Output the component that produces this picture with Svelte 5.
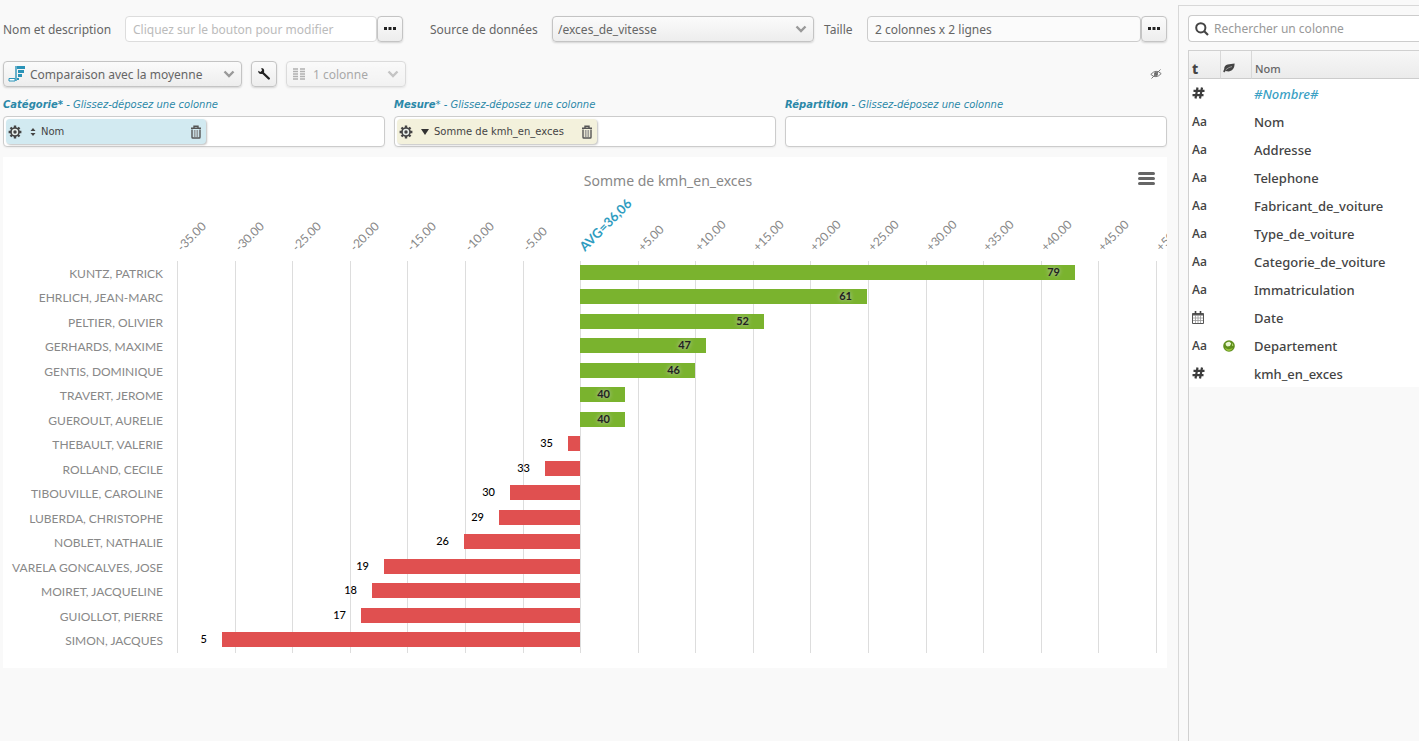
<script lang="ts">
	type Row = { name: string; value: number };

	const avg = 36.06;
	const rows: Row[] = [
		{ name: 'KUNTZ, PATRICK', value: 79 },
		{ name: 'EHRLICH, JEAN-MARC', value: 61 },
		{ name: 'PELTIER, OLIVIER', value: 52 },
		{ name: 'GERHARDS, MAXIME', value: 47 },
		{ name: 'GENTIS, DOMINIQUE', value: 46 },
		{ name: 'TRAVERT, JEROME', value: 40 },
		{ name: 'GUEROULT, AURELIE', value: 40 },
		{ name: 'THEBAULT, VALERIE', value: 35 },
		{ name: 'ROLLAND, CECILE', value: 33 },
		{ name: 'TIBOUVILLE, CAROLINE', value: 30 },
		{ name: 'LUBERDA, CHRISTOPHE', value: 29 },
		{ name: 'NOBLET, NATHALIE', value: 26 },
		{ name: 'VARELA GONCALVES, JOSE', value: 19 },
		{ name: 'MOIRET, JACQUELINE', value: 18 },
		{ name: 'GUIOLLOT, PIERRE', value: 17 },
		{ name: 'SIMON, JACQUES', value: 5 }
	];
	const ticks = Array.from({ length: 18 }, (_, i) => i * 5 - 35);

	const columns = [
		{ type: 'number', name: '#Nombre#', computed: true },
		{ type: 'text', name: 'Nom' },
		{ type: 'text', name: 'Addresse' },
		{ type: 'text', name: 'Telephone' },
		{ type: 'text', name: 'Fabricant_de_voiture' },
		{ type: 'text', name: 'Type_de_voiture' },
		{ type: 'text', name: 'Categorie_de_voiture' },
		{ type: 'text', name: 'Immatriculation' },
		{ type: 'date', name: 'Date' },
		{ type: 'text', name: 'Departement', geo: true },
		{ type: 'number', name: 'kmh_en_exces' }
	];

	// chart geometry
	const left = 174;
	const right = 11;
	const top = 104;
	const plotHeight = 392;
	const step = plotHeight / rows.length;
	const barHeight = 15;

	let width = $state(1164);
	let unit = $derived((width - left - right) / 85);

	const x = (v: number) => Math.round(left + (v + 35) * unit);
	const y = (i: number) => Math.floor(top + (i + 0.5) * step);

	function tickLabel(t: number) {
		if (t === 0) return 'AVG=36,06';
		return (t > 0 ? '+' : '') + t.toFixed(2);
	}
</script>

{#snippet chevron()}
	<svg class="chevron" viewBox="0 0 12 8" width="12" height="8" aria-hidden="true">
		<path d="M1.5 1.5 6 6l4.5-4.5" fill="none" stroke="currentColor" stroke-width="2.4" />
	</svg>
{/snippet}

{#snippet gear()}
	<svg viewBox="0 0 14 14" width="14" height="14" aria-hidden="true">
		<path
			d="M7 .6v12.8M.6 7h12.800M2.500 2.500l9 9M11.500 2.500l-9 9"
			stroke="#444"
			stroke-width="2.4"
		/>
		<circle cx="7" cy="7" r="4" fill="#e8eeea" stroke="#444" stroke-width="1.6" />
		<circle cx="7" cy="7" r="1.7" fill="#444" />
	</svg>
{/snippet}

{#snippet trash()}
	<svg viewBox="0 0 12 14" width="12" height="14" aria-hidden="true">
		<path d="M4 2.500V1.200h4v1.300M1 3.200h10" fill="none" stroke="#555" stroke-width="1.400" />
		<path d="M2 4.500v7.700q0 .8.8.8h6.400q.8 0 .8-.8V4.500" fill="none" stroke="#555" stroke-width="1.400" />
		<path d="M4.400 5v7M6 5v7M7.600 5v7" stroke="#888" stroke-width=".9" />
	</svg>
{/snippet}

{#snippet dots()}
	<svg viewBox="0 0 12 3" width="12" height="3" aria-hidden="true">
		<path d="M0 0h3v3H0zM4.500 0h3v3h-3zM9 0h3v3H9z" fill="#222" />
	</svg>
{/snippet}

<div class="page">
	<main>
		<div class="settings">
			<label for="name">Nom et description</label>
			<div class="field">
				<input id="name" class="faded" type="text" placeholder="Cliquez sur le bouton pour modifier" />
				<button class="btn more" aria-label="Modifier">{@render dots()}</button>
			</div>
			<label class="source-label" for="source">Source de données</label>
			<div class="select">
				<select id="source" class="source"><option>/exces_de_vitesse</option></select>
				{@render chevron()}
			</div>
			<label class="size-label" for="size">Taille</label>
			<div class="field">
				<input id="size" type="text" value="2 colonnes x 2 lignes" />
				<button class="btn more" aria-label="Modifier">{@render dots()}</button>
			</div>
		</div>

		<div class="tools">
			<div class="select type">
				<svg class="lead" viewBox="0 0 18 18" width="18" height="18" aria-hidden="true">
					<path d="M8 1v15" stroke="#2a93b8" stroke-width="1.400" />
					<path d="M9 1h8v3H9zM10 5h6v3h-6zM10 9h4v3h-4zM9 13h2v2H9z" fill="#2a93b8" />
					<path d="M1 13.500h6v2.500H1z" fill="#fff" stroke="#2a93b8" />
				</svg>
				<select aria-label="Type de graphique"><option>Comparaison avec la moyenne</option></select>
				{@render chevron()}
			</div>
			<button class="btn" aria-label="Options">
				<svg viewBox="0 0 14 14" width="14" height="14" aria-hidden="true">
					<path d="M5.500 5.500l6.300 6" stroke="#222" stroke-width="2.400" stroke-linecap="round" />
					<path d="M4.200 1A3 3 0 1 1 1.200 3.800L3.400 5 5 3.500z" fill="#222" />
				</svg>
			</button>
			<div class="select count">
				<svg class="lead" viewBox="0 0 13 12" width="13" height="12" aria-hidden="true">
					<path
						d="M0 1h5M0 3.500h5M0 6h5M0 8.500h5M0 11h5M7 1h5M7 3.500h5M7 6h5M7 8.500h5M7 11h5"
						stroke="#777"
						stroke-width="1.400"
					/>
				</svg>
				<select aria-label="Nombre de colonnes" disabled><option>1 colonne</option></select>
				{@render chevron()}
			</div>
			<button class="eye" aria-label="Masquer">
				<svg viewBox="0 0 12 10" width="12" height="10" aria-hidden="true">
					<path d="M.8 5.400Q6-.4 11.200 4.600 6 10.400.8 5.400z" fill="none" stroke="#777" />
					<circle cx="6" cy="5" r="2" fill="#666" />
					<path d="M1.500 9.500l9-9" stroke="#777" />
				</svg>
			</button>
		</div>

		<div class="zones">
			<section>
				<h2><b>Catégorie*</b> - Glissez-déposez une colonne</h2>
				<div class="zone">
					<div class="chip category">
						<button aria-label="Réglages">{@render gear()}</button>
						<svg class="sort" viewBox="0 0 6 8" width="6" height="8" aria-hidden="true">
							<path d="M3 0l2.500 3h-5zM3 8l2.500-3h-5z" fill="#444" />
						</svg>
						<span>Nom</span>
						<button aria-label="Supprimer">{@render trash()}</button>
					</div>
				</div>
			</section>
			<section>
				<h2><b>Mesure</b>* - Glissez-déposez une colonne</h2>
				<div class="zone">
					<div class="chip measure">
						<button aria-label="Réglages">{@render gear()}</button>
						<svg class="sort" viewBox="0 0 8 6" width="8" height="6" aria-hidden="true">
							<path d="M0 0h8L4 6z" fill="#333" />
						</svg>
						<span>Somme de kmh_en_exces</span>
						<button aria-label="Supprimer">{@render trash()}</button>
					</div>
				</div>
			</section>
			<section>
				<h2><b>Répartition</b> - Glissez-déposez une colonne</h2>
				<div class="zone"></div>
			</section>
		</div>

		<div class="chart" bind:clientWidth={width}>
			<svg {width} height="511" role="img" aria-label="Somme de kmh_en_exces">
				<text class="title" x={width / 2 + 83} y="29">Somme de kmh_en_exces</text>
				{#each ticks as t}
					<line class="grid" x1={x(t) + 0.5} x2={x(t) + 0.5} y1={top} y2={top + plotHeight} />
					<text class="tick" class:avg={t === 0} transform="translate({x(t) + 5} {top - 9}) rotate(-45)">
						{tickLabel(t)}
					</text>
				{/each}
				{#each rows as row, i}
					{@const end = x(row.value - avg)}
					{@const up = row.value > avg}
					<text class="name" x="160" y={y(i) + 5}>{row.name}</text>
					<rect
						class={up ? 'up' : 'down'}
						x={Math.min(x(0), end)}
						y={y(i) - 8}
						width={Math.abs(end - x(0))}
						height={barHeight}
					/>
					<text class="value" class:inside={up} x={end - 15} y={y(i) + 3}>{row.value}</text>
				{/each}
			</svg>
			<button class="menu" aria-label="Menu du graphique">
				<svg viewBox="0 0 17 13" width="17" height="13" aria-hidden="true">
					<path d="M1.500 1.500h14M1.500 6.500h14M1.500 11.500h14" stroke="#666" stroke-width="3" stroke-linecap="round" />
				</svg>
			</button>
		</div>
	</main>

	<aside>
		<div class="search">
			<svg viewBox="0 0 14 14" width="14" height="14" aria-hidden="true">
				<circle cx="5.800" cy="5.800" r="4.600" fill="none" stroke="#444" stroke-width="2" />
				<path d="M9 9l4 4" stroke="#444" stroke-width="2.200" />
			</svg>
			<input type="search" aria-label="Rechercher un colonne" placeholder="Rechercher un colonne" />
		</div>
		<div class="list">
			<table>
				<thead>
					<tr>
						<th class="t">t</th>
						<th aria-label="Hiérarchie">
							<svg viewBox="0 0 12 10" width="12" height="10" aria-hidden="true">
								<path d="M11.600.6C7 1.400 1.200.6 1.200 6L.2 8.600l1 .8 1.400-1.400c5 1.600 9-1 9-7.400z" fill="#444" />
								<path d="M2.500 7.200C4.500 5 6.500 4.200 9 3.600" fill="none" stroke="#bbb" stroke-width=".7" />
							</svg>
						</th>
						<th>Nom</th>
					</tr>
				</thead>
				<tbody>
					{#each columns as col}
						<tr>
							<td class="kind">
								{#if col.type === 'text'}
									Aa
								{:else if col.type === 'number'}
									<svg viewBox="0 0 13 12" width="13" height="12" aria-label="Nombre">
										<path d="M5.500.5l-2 11M10 .5l-2 11M1.500 3.800h11M.5 8.200h11" stroke="#3c3c3c" stroke-width="2.200" />
									</svg>
								{:else}
									<svg viewBox="0 0 12 13" width="12" height="13" aria-label="Date">
										<path d="M.5 2.500h11v10H.5z" fill="#fff" stroke="#555" />
										<path d="M.5 3.500h11" stroke="#555" stroke-width="2" />
										<path d="M3.500 0v3M8.500 0v3" stroke="#444" stroke-width="1.600" />
										<path d="M3.500 4v8M6 4v8M8.500 4v8M1 7h10M1 9.500h10" stroke="#999" stroke-width=".8" />
									</svg>
								{/if}
							</td>
							<td>
								{#if col.geo}
									<svg viewBox="0 0 12 12" width="12" height="12" aria-label="Géographique">
										<circle cx="6" cy="6" r="5.800" fill="#5f8f1c" />
										<path d="M2 7.500Q5 10.500 10 8 8.500 11 6 11 3 11 2 7.500z" fill="#98c43c" />
										<path d="M2.500 3.500Q4 1.500 6.500 1.800L8.200 3.200 7 6 4.500 6.500 3 5.500z" fill="#e9f6d0" />
										<path d="M9 3l1.500 2.500L9 6z" fill="#b9dd74" />
									</svg>
								{/if}
							</td>
							<td class:computed={col.computed}>{col.name}</td>
						</tr>
					{/each}
				</tbody>
			</table>
		</div>
	</aside>
</div>

<style>
	:global(body) {
		background: #f9f9f9;
		font-family: 'Noto Sans', 'Open Sans', sans-serif;
		font-size: 12px;
		color: #666;
	}

	.page {
		display: flex;
		min-height: 100vh;
		overflow: hidden;
	}

	main {
		flex: 1;
		min-width: 0;
		padding: 16px 11px 0 3px;
	}

	input,
	select,
	button {
		box-sizing: border-box;
		margin: 0;
		font: inherit;
		color: inherit;
	}

	input,
	select,
	.btn {
		height: 26px;
		border: 1px solid #ccc;
		border-radius: 4px;
	}

	input {
		flex: 1;
		min-width: 0;
		padding: 0 7px;
		background: #fbfbfb;
	}

	input::placeholder {
		color: #999;
		opacity: 1;
	}

	.faded {
		background: #fff;
		border-color: #ddd;
	}

	.faded::placeholder {
		color: #bbb;
	}

	.btn {
		display: flex;
		align-items: center;
		justify-content: center;
		width: 26px;
		padding: 0;
	}

	.more {
		padding-bottom: 2px;
	}

	select,
	.btn {
		background: linear-gradient(#fbfbfb, #ededed);
		border-color: #c4c4c4;
		box-shadow: 0 1px 2px rgba(0, 0, 0, 0.15);
	}

	.settings {
		display: grid;
		grid-template-columns: 122px 278fr 149px 262fr 53px 300fr;
		align-items: center;
	}

	.source-label {
		padding-left: 27px;
	}

	.size-label {
		padding-left: 10px;
	}

	.field {
		display: flex;
	}

	.select {
		position: relative;
		display: flex;
		align-items: center;
	}

	select {
		width: 100%;
		padding: 0 26px;
		appearance: none;
	}

	select.source {
		padding-left: 5px;
	}

	.chevron {
		position: absolute;
		right: 7px;
		color: #999;
	}

	.lead {
		position: absolute;
		left: 5px;
	}

	.tools {
		display: flex;
		align-items: center;
		gap: 9px;
		margin-top: 19px;
	}

	.type {
		width: 239px;
	}

	.count {
		width: 120px;
		opacity: 0.55;
	}

	.count select {
		opacity: 1;
	}

	.count .lead {
		left: 7px;
	}

	.eye {
		display: flex;
		margin-left: auto;
		padding: 0 5px;
		border: 0;
		background: none;
	}

	.zones {
		display: grid;
		grid-template-columns: repeat(3, 1fr);
		gap: 9px;
		margin-top: 10px;
	}

	h2 {
		margin: 0 0 3px;
		font: italic 10px/16px 'DejaVu Sans', sans-serif;
		color: #2b88a8;
	}

	.zone {
		box-sizing: border-box;
		height: 31px;
		padding: 2px;
		background: #fff;
		border: 1px solid #ccc;
		border-radius: 4px;
		box-shadow: 0 1px 2px rgba(0, 0, 0, 0.06);
	}

	.chip {
		display: flex;
		align-items: center;
		box-sizing: border-box;
		width: 200px;
		height: 25px;
		padding: 0 4px 0 2px;
		border-radius: 4px;
		box-shadow: 1px 1px 2px rgba(0, 0, 0, 0.25);
		font: 10px/15px 'DejaVu Sans', sans-serif;
		color: #444;
	}

	.chip button {
		display: flex;
		padding: 0;
		border: 0;
		background: none;
	}

	.chip span {
		flex: 1;
		margin-left: 5px;
	}

	.sort {
		margin-left: 8px;
	}

	.category {
		background: #d2eaf1;
	}

	.measure {
		background: #f3f1dc;
	}

	.chart {
		position: relative;
		margin-top: 10px;
		height: 511px;
		background: #fff;
		overflow: hidden;
	}

	.chart > svg {
		display: block;
	}

	.menu {
		position: absolute;
		top: 15px;
		right: 12px;
		display: flex;
		padding: 0;
		border: 0;
		background: none;
	}

	.title {
		font-size: 14px;
		fill: #888;
		text-anchor: middle;
	}

	.grid {
		stroke: #ddd;
		shape-rendering: crispEdges;
	}

	.tick,
	.name,
	.value {
		font-family: Lato, sans-serif;
		font-size: 12px;
		fill: #888;
	}

	.tick.avg {
		font-size: 13px;
		font-weight: bold;
		fill: #2f9cc0;
	}

	.name,
	.value {
		text-anchor: end;
	}

	.value {
		font-size: 11px;
		font-weight: 500;
		fill: #000;
	}

	.inside {
		font-weight: bold;
		fill: #222;
		text-shadow: 0 0 4px #ccc;
	}

	.up {
		fill: #7ab32e;
	}

	.down {
		fill: #e05050;
	}

	aside {
		display: flex;
		flex-direction: column;
		box-sizing: border-box;
		width: 241px;
		margin-top: 5px;
		padding: 9px 0 0 9px;
		border: 1px solid #d8d8d8;
		border-width: 1px 0 0 1px;
	}

	.search {
		display: flex;
		align-items: center;
		box-sizing: border-box;
		height: 27px;
		padding-left: 6px;
		background: #fff;
		border: 1px solid #ccc;
		border-right: 0;
		border-radius: 4px 0 0 4px;
	}

	.search input {
		border: 0;
		background: none;
		height: 24px;
		padding-left: 5px;
	}

	.list {
		flex: 1;
		margin-top: 8px;
		border: 1px solid #d0d0d0;
		border-width: 1px 0 0 1px;
	}

	table {
		width: 100%;
		table-layout: fixed;
		border-collapse: separate;
		border-spacing: 0;
		background: #fff;
	}

	th,
	td {
		box-sizing: border-box;
		height: 28px;
		padding: 2px 3px 0;
		text-align: left;
		vertical-align: middle;
	}

	th {
		padding: 8px 3px 0;
		border-bottom: 1px solid #ccc;
		border-left: 1px solid #d8d8d8;
		background: linear-gradient(#f7f7f7, #ebebeb);
		font-size: 11px;
		font-weight: 500;
	}

	th:first-child,
	th:nth-child(2) {
		width: 31px;
	}

	th:nth-child(2) {
		padding-left: 2px;
	}

	th.t {
		border-left: 0;
		font-size: 14px;
		line-height: 18px;
		font-weight: 800;
		color: #444;
	}

	td {
		font-size: 13px;
		font-weight: 500;
		color: #444;
	}

	td svg {
		display: block;
	}

	td.kind {
		padding-top: 0;
		font: 600 12px 'Open Sans', sans-serif;
	}

	td.computed {
		font-style: italic;
		color: #3a9fc4;
	}
</style>
